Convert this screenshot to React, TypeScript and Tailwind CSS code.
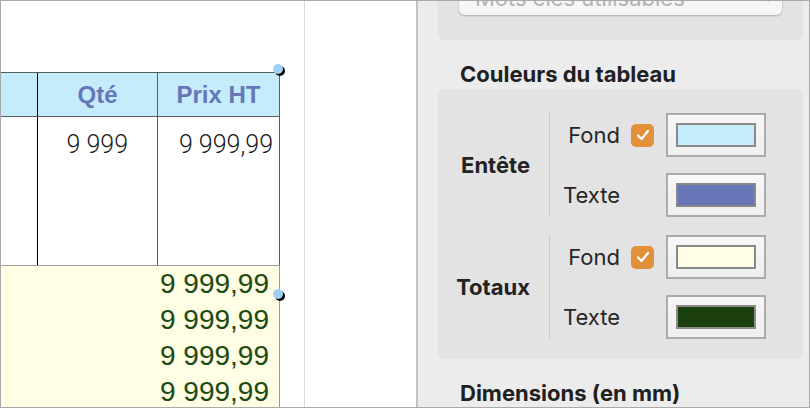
import React from 'react';

const tableFont = { fontFamily: '"Liberation Sans", Arial, sans-serif' };

function Check() {
  return (
    <div className="w-[23px] h-[23px] rounded-[5px] bg-[#e2913a] flex items-center justify-center">
      <svg width="14" height="12" viewBox="0 0 14 12" fill="none">
        <path d="M2 6.5 L5.5 10 L12 2" stroke="white" strokeWidth="2.2" strokeLinecap="round" strokeLinejoin="round" />
      </svg>
    </div>
  );
}

function Well({ color }: { color: string }) {
  return (
    <div className="w-[100px] h-[44px] border-2 border-[#ababab] bg-gradient-to-b from-[#f7f7f7] to-[#efefef] pt-[8px] pl-[8px]">
      <div className="w-[80px] h-[24px] border-2 border-[#8a8a8a]" style={{ backgroundColor: color }} />
    </div>
  );
}

function Row({ label, checked, color }: { label: string; checked?: boolean; color: string }) {
  return (
    <div className="flex items-center h-[44px]">
      <span className="w-[70px] text-right text-[22px] leading-none text-[#262626] whitespace-nowrap">{label}</span>
      <div className="w-[23px] ml-[11px]">{checked && <Check />}</div>
      <div className="ml-[12px]">
        <Well color={color} />
      </div>
    </div>
  );
}

function Group({ title, bg, fg }: { title: string; bg: string; fg: string }) {
  return (
    <div className="flex items-center">
      <div className="w-[92px] text-right text-[22px] font-bold text-[#232323] whitespace-nowrap">{title}</div>
      <div className="ml-[19px] border-l border-[#c9c9c9] flex flex-col gap-[16px]">
        <Row label="Fond" checked color={bg} />
        <Row label="Texte" color={fg} />
      </div>
    </div>
  );
}

export default function App() {
  const totals = ['9 999,99', '9 999,99', '9 999,99', '9 999,99'];
  return (
    <div
      className="w-[810px] h-[408px] border border-[#a9a9a9] flex overflow-hidden"
      style={{ fontFamily: 'Inter, "Liberation Sans", sans-serif' }}
    >
      {/* Canvas */}
      <div className="w-[415px] h-full bg-white flex shrink-0">
        <div className="w-[304px] h-full border-r border-[#dadada] pt-[71px] relative" style={tableFont}>
          {/* Header */}
          <div className="w-[279px] h-[45px] flex bg-[#c5ecfb] border-t border-b border-r border-[#5c5c5c] text-[24px] font-bold text-[#6676b8]">
            <div className="w-[37px] border-r border-black" />
            <div className="w-[120px] border-r border-[#5c5c5c] flex items-center justify-center">Qté</div>
            <div className="flex-1 flex items-center justify-center">Prix HT</div>
          </div>
          {/* Body */}
          <div className="w-[279px] h-[148px] flex border-r border-[#5c5c5c] text-[25px] font-light text-[#1a1a1a]" style={{ fontFamily: 'Roboto, "Liberation Sans", sans-serif' }}>
            <div className="w-[37px] border-r border-black" />
            <div className="w-[120px] border-r border-[#5c5c5c] text-right pr-[29px] pt-[15px] leading-none">9 999</div>
            <div className="flex-1 text-right pr-[6px] pt-[15px] leading-none">9 999,99</div>
          </div>
          {/* Totals */}
          <div className="w-[279px] h-[160px] bg-[#fffde3] border-t border-r border-[#9a9a9a] flex flex-col items-end pr-[10px] pt-0 text-[28px] text-[#1d4a12] leading-[36px]">
            {totals.map((t, i) => (
              <div key={i}>{t}</div>
            ))}
          </div>
          {/* selection handles */}
          <div className="absolute left-[274px] top-[65px] w-[10px] h-[10px] rounded-full bg-black" />
          <div className="absolute left-[272px] top-[63px] w-[10px] h-[10px] rounded-full bg-[#9fd1f6]" />
          <div className="absolute left-[274px] top-[290px] w-[10px] h-[10px] rounded-full bg-black" />
          <div className="absolute left-[272px] top-[288px] w-[10px] h-[10px] rounded-full bg-[#9fd1f6]" />
        </div>
      </div>

      {/* Divider */}
      <div className="w-[2px] h-full bg-[#c3c3c3] shrink-0" />

      {/* Inspector */}
      <div className="flex-1 h-full bg-[#ececec] pl-[20px] pr-[6px] flex flex-col overflow-hidden">
        <div className="mt-[-30px] rounded-[7px] bg-[#e3e3e3] px-[21px] pt-[10px] pb-[25px] shrink-0">
          <div className="h-[34px] rounded-[6px] bg-[#f6f6f6] shadow-[0_1px_2px_rgba(0,0,0,0.25)] flex items-center justify-between pl-[16px] pr-[10px] text-[22px] text-[#b3b3b3]">
            <span>Mots clés utilisables</span>
            <span className="text-[10px]">⌄</span>
          </div>
        </div>

        <div className="mt-[22px] ml-[22px] h-[24px] leading-[24px] text-[22px] font-bold text-[#202020] shrink-0">Couleurs du tableau</div>

        <div className="mt-[3px] rounded-[7px] bg-[#e3e3e3] pt-[24px] pb-[20px] flex flex-col gap-[18px] shrink-0">
          <Group title="Entête" bg="#c5ecfb" fg="#6676b8" />
          <Group title="Totaux" bg="#fffde3" fg="#1a4010" />
        </div>

        <div className="mt-[22px] ml-[22px] h-[24px] leading-[24px] text-[22px] font-bold text-[#202020] shrink-0">Dimensions (en mm)</div>
        <div className="mt-[3px] rounded-[7px] bg-[#e3e3e3] h-[60px] shrink-0" />
      </div>
    </div>
  );
}
